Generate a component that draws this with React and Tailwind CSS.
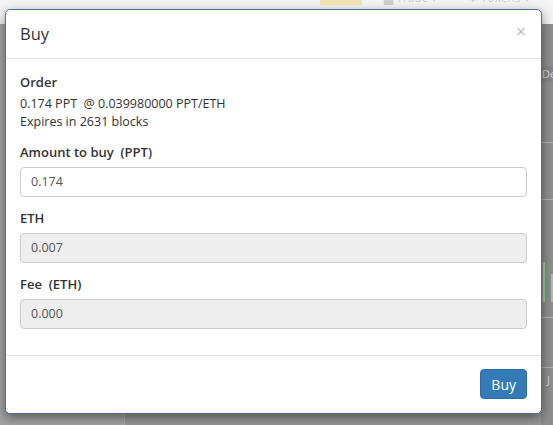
export default function App() {
  return (
    <div
      className="relative w-[553px] h-[425px] overflow-hidden bg-[#9b9b9b] text-[#333]"
      style={{ fontFamily: '"Open Sans", "Noto Sans", sans-serif' }}
    >
      {/* dimmed page behind the modal */}
      <div className="flex flex-col h-full">
        <div className="h-[24px] bg-[#f4f4f4] overflow-hidden flex items-start">
          <div className="ml-[320px] mt-[-9px] w-[42px] h-[14px] bg-[#f3e4b3]" />
          <div className="ml-[22px] mt-[-9px] text-[12px] leading-[14px] text-[#cfcfcf]">▆ Trade ▾</div>
          <div className="ml-[30px] mt-[-9px] text-[12px] leading-[14px] text-[#cfcfcf]">✱ Tokens ▾</div>
        </div>
        <div className="flex-1 flex">
          <div className="w-[125px] bg-[#a4a4a4] border-r border-[#b0b0b0]" />
          <div className="flex-1 bg-[#999999]" />
          <div className="w-[12px] flex flex-col bg-[#8e8e8e] text-[11px] text-[#d8d8d8]">
            <div className="h-[42px]" />
            <div className="h-[16px] leading-[16px] pl-[1px] bg-[#858585]">De</div>
            <div className="h-[61px] border-b border-[#b4b4b4]" />
            <div className="h-[57px] border-b border-[#b4b4b4]" />
            <div className="h-[62px]" />
            <div className="h-[40px] flex items-stretch gap-[6px] pl-[2px]">
              <div className="w-[2px] bg-[#93d493]" />
              <div className="w-[2px] mt-[12px] bg-[#93d493]" />
            </div>
            <div className="h-[16px] border-b border-[#b4b4b4]" />
            <div className="h-[50px] border-b border-[#b4b4b4]" />
            <div className="h-[24px] leading-[24px] pl-[6px]">J</div>
          </div>
        </div>
      </div>

      {/* modal */}
      <div className="absolute left-[5px] top-[9px] w-[537px] h-[405px] flex flex-col bg-white border border-[#4f6f9f] rounded-[5px] shadow-[0_4px_12px_rgba(0,0,0,0.45)]">
        <div className="h-[49px] shrink-0 flex items-center justify-between border-b border-[#e5e5e5] pl-[14px] pr-[15px]">
          <div className="text-[16.5px] leading-[24px] font-normal text-[#333]">Buy</div>
          <div className="text-[18px] leading-none font-normal text-[#bdbdbd] -mt-[7px]">×</div>
        </div>
        <div className="px-[14px] pt-[13px] pb-[26px] text-[12.5px]">
          <div className="text-[13px] leading-[20px] font-semibold mb-[3px]">Order</div>
          <div className="leading-[18px] whitespace-pre">0.174 PPT  @ 0.039980000 PPT/ETH</div>
          <div className="leading-[18px]">Expires in 2631 blocks</div>
          <div className="flex flex-col gap-[11px] mt-[11px] text-[13px]">
            <div>
              <div className="leading-[20px] font-semibold mb-[5px] whitespace-pre">Amount to buy  (PPT)</div>
              <div className="h-[30px] flex items-center px-[10px] border border-[#cccccc] rounded-[4px] bg-white text-[#555] text-[12.5px]">0.174</div>
            </div>
            <div>
              <div className="leading-[20px] font-semibold mb-[5px]">ETH</div>
              <div className="h-[30px] flex items-center px-[10px] border border-[#cccccc] rounded-[4px] bg-[#eeeeee] text-[#555] text-[12.5px]">0.007</div>
            </div>
            <div>
              <div className="leading-[20px] font-semibold mb-[5px] whitespace-pre">Fee  (ETH)</div>
              <div className="h-[30px] flex items-center px-[10px] border border-[#cccccc] rounded-[4px] bg-[#eeeeee] text-[#555] text-[12.5px]">0.000</div>
            </div>
          </div>
        </div>
        <div className="flex justify-end border-t border-[#e5e5e5] pt-[13px] px-[14px]">
          <div className="h-[30px] px-[10px] flex items-center rounded-[4px] bg-[#337ab7] border border-[#2e6da4] text-white text-[14px]">Buy</div>
        </div>
      </div>
    </div>
  );
}
